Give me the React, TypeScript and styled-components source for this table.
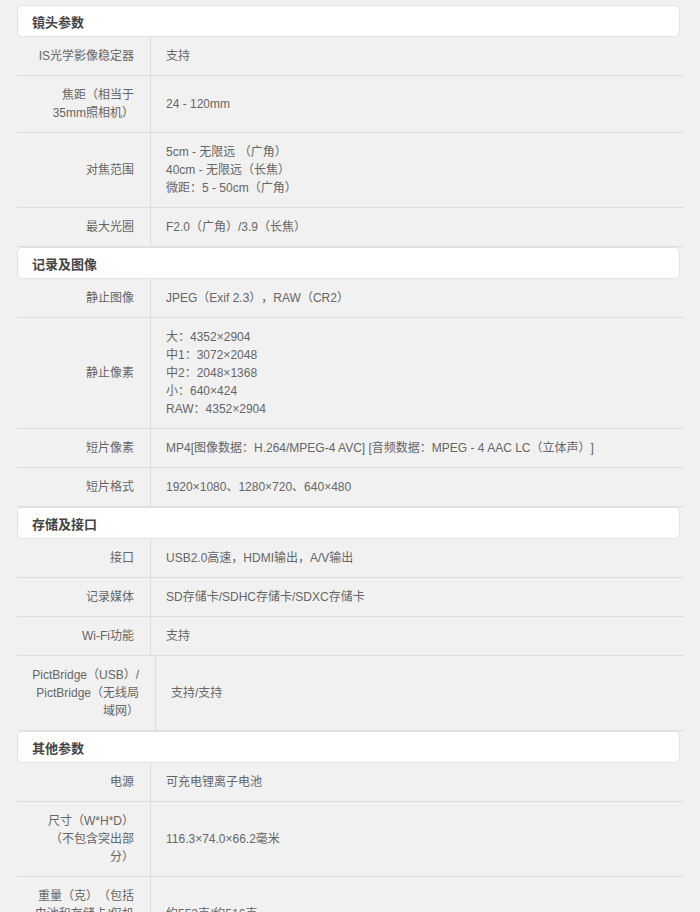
import React from "react";
import styled, { createGlobalStyle } from "styled-components";

const GlobalStyle = createGlobalStyle`
  html, body {
    margin: 0;
    padding: 0;
    background: #f1f1f1;
  }
  body {
    font-family: "Liberation Sans", Arial, "Noto Sans CJK SC", sans-serif;
    font-size: 12px;
    color: #666;
    text-spacing-trim: space-all;
  }
`;

const Page = styled.div`
  padding: 5px 16px 0 17px;
  width: 667px;
`;

const SectionHeader = styled.div`
  margin-right: 4px;
  height: 30px;
  display: flex;
  align-items: center;
  padding-left: 14px;
  background: #fff;
  border: 1px solid #e2e2e2;
  border-radius: 5px;
  font-size: 13px;
  font-weight: bold;
  color: #444;
`;

const Row = styled.div`
  display: flex;
  align-items: stretch;
  border-bottom: 1px solid #dddddd;
  line-height: 18px;
`;

const Label = styled.div<{ $width: number; $padLeft: number }>`
  box-sizing: border-box;
  flex: 0 0 auto;
  width: ${(p) => p.$width}px;
  padding: 10px 16px 10px ${(p) => p.$padLeft}px;
  border-right: 1px solid #dddddd;
  display: flex;
  align-items: center;
  justify-content: flex-end;
  text-align: right;
  text-spacing-trim: space-all;
`;

const Value = styled.div`
  flex: 1 1 auto;
  padding: 10px 15px;
  display: flex;
  align-items: center;
  text-spacing-trim: space-all;
`;

type Spec = { label: string; value: React.ReactNode; wide?: boolean };
type Section = { title: string; rows: Spec[] };

const lines = (...ls: string[]) => (
  <div>
    {ls.map((l, i) => (
      <React.Fragment key={i}>
        {i > 0 && <br />}
        {l}
      </React.Fragment>
    ))}
  </div>
);

const sections: Section[] = [
  {
    title: "镜头参数",
    rows: [
      { label: "IS光学影像稳定器", value: "支持" },
      { label: "焦距（相当于35mm照相机）", value: "24 - 120mm" },
      {
        label: "对焦范围",
        value: lines("5cm - 无限远 （广角）", "40cm - 无限远（长焦）", "微距：5 - 50cm（广角）"),
      },
      { label: "最大光圈", value: "F2.0（广角）/3.9（长焦）" },
    ],
  },
  {
    title: "记录及图像",
    rows: [
      { label: "静止图像", value: "JPEG（Exif 2.3），RAW（CR2）" },
      {
        label: "静止像素",
        value: lines("大：4352×2904", "中1：3072×2048", "中2：2048×1368", "小：640×424", "RAW：4352×2904"),
      },
      { label: "短片像素", value: "MP4[图像数据：H.264/MPEG-4 AVC] [音频数据：MPEG - 4 AAC LC（立体声）]" },
      { label: "短片格式", value: "1920×1080、1280×720、640×480" },
    ],
  },
  {
    title: "存储及接口",
    rows: [
      { label: "接口", value: "USB2.0高速，HDMI输出，A/V输出" },
      { label: "记录媒体", value: "SD存储卡/SDHC存储卡/SDXC存储卡" },
      { label: "Wi-Fi功能", value: "支持" },
      { label: "PictBridge（USB）/ PictBridge（无线局域网）", value: "支持/支持", wide: true },
    ],
  },
  {
    title: "其他参数",
    rows: [
      { label: "电源", value: "可充电锂离子电池" },
      { label: "尺寸（W*H*D）（不包含突出部分）", value: "116.3×74.0×66.2毫米" },
      { label: "重量（克）（包括电池和存储卡/仅机身）", value: "约552克/约516克" },
    ],
  },
];

export default function App() {
  return (
    <>
      <GlobalStyle />
      <Page>
        {sections.map((s) => (
          <React.Fragment key={s.title}>
            <SectionHeader>{s.title}</SectionHeader>
            {s.rows.map((r) => (
              <Row key={r.label}>
                <Label $width={r.wide ? 139 : 134} $padLeft={r.wide ? 10 : 15}>
                  {r.label}
                </Label>
                <Value>{r.value}</Value>
              </Row>
            ))}
          </React.Fragment>
        ))}
      </Page>
    </>
  );
}
